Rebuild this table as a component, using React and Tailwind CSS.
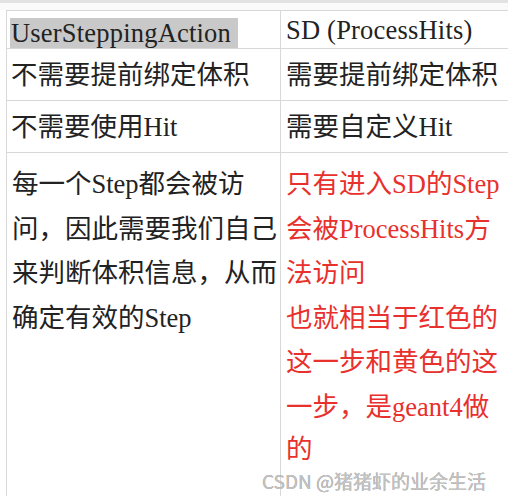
import React from 'react';

const leftLines = ['每一个Step都会被访', '问，因此需要我们自己', '来判断体积信息，从而', '确定有效的Step'];
const rightLines = [
  '只有进入SD的Step',
  '会被ProcessHits方',
  '法访问',
  '也就相当于红色的',
  '这一步和黄色的这',
  '一步，是geant4做',
];

export default function App() {
  return (
    <div className="w-[508px] h-[496px] bg-white relative overflow-hidden text-[#222] font-['Liberation_Serif','Noto_Sans_CJK_SC',serif]">
      <div className="h-[3px] bg-[#e2e2e2]" />
      <div className="h-[7px] bg-[#fafafa]" />

      {/* table */}
      <div className="ml-[6px] grid grid-cols-[274px_1fr] border-t border-l border-[#d8d8d8] text-[26.5px]">
        {/* header */}
        <div className="h-[38px] border-b border-r border-[#d8d8d8] pl-[3px] pt-[3px]">
          <span className="inline-block bg-[#c9c9c9] h-[30px] leading-[30px] pl-[1px] pr-[7px] tracking-[0.2px]">UserSteppingAction</span>
        </div>
        <div className="h-[38px] border-b border-[#d8d8d8] pl-[5px] leading-[38px] tracking-[0.2px]">SD (ProcessHits)</div>

        {/* row 1 */}
        <div className="h-[52px] border-b border-r border-[#d8d8d8] pl-[4px] leading-[52px] whitespace-nowrap">不需要提前绑定体积</div>
        <div className="h-[52px] border-b border-[#d8d8d8] pl-[5px] leading-[52px] whitespace-nowrap">需要提前绑定体积</div>

        {/* row 2 */}
        <div className="h-[52px] border-b border-r border-[#d8d8d8] pl-[4px] leading-[52px] whitespace-nowrap">不需要使用Hit</div>
        <div className="h-[52px] border-b border-[#d8d8d8] pl-[5px] leading-[52px] whitespace-nowrap">需要自定义Hit</div>

        {/* row 3 */}
        <div className="h-[350px] border-r border-[#d8d8d8] pl-[5px] pt-[9px] leading-[44.5px]">
          {leftLines.map((l) => (
            <div key={l} className="whitespace-nowrap">{l}</div>
          ))}
        </div>
        <div className="h-[350px] pl-[5px] pt-[9px] leading-[44.5px] text-[#e8302c]">
          {rightLines.map((l) => (
            <div key={l} className="whitespace-nowrap">{l}</div>
          ))}
          <div className="mt-[5px] leading-[30px]">的</div>
        </div>
      </div>

      {/* watermark */}
      <div className="absolute left-[262px] top-[471px] text-[19px] leading-[20px] text-[#c4c4c4] font-['Noto_Sans_CJK_SC',sans-serif] [text-shadow:0_0_0.5px_#777]">
        CSDN @猪猪虾的业余生活
      </div>
    </div>
  );
}
